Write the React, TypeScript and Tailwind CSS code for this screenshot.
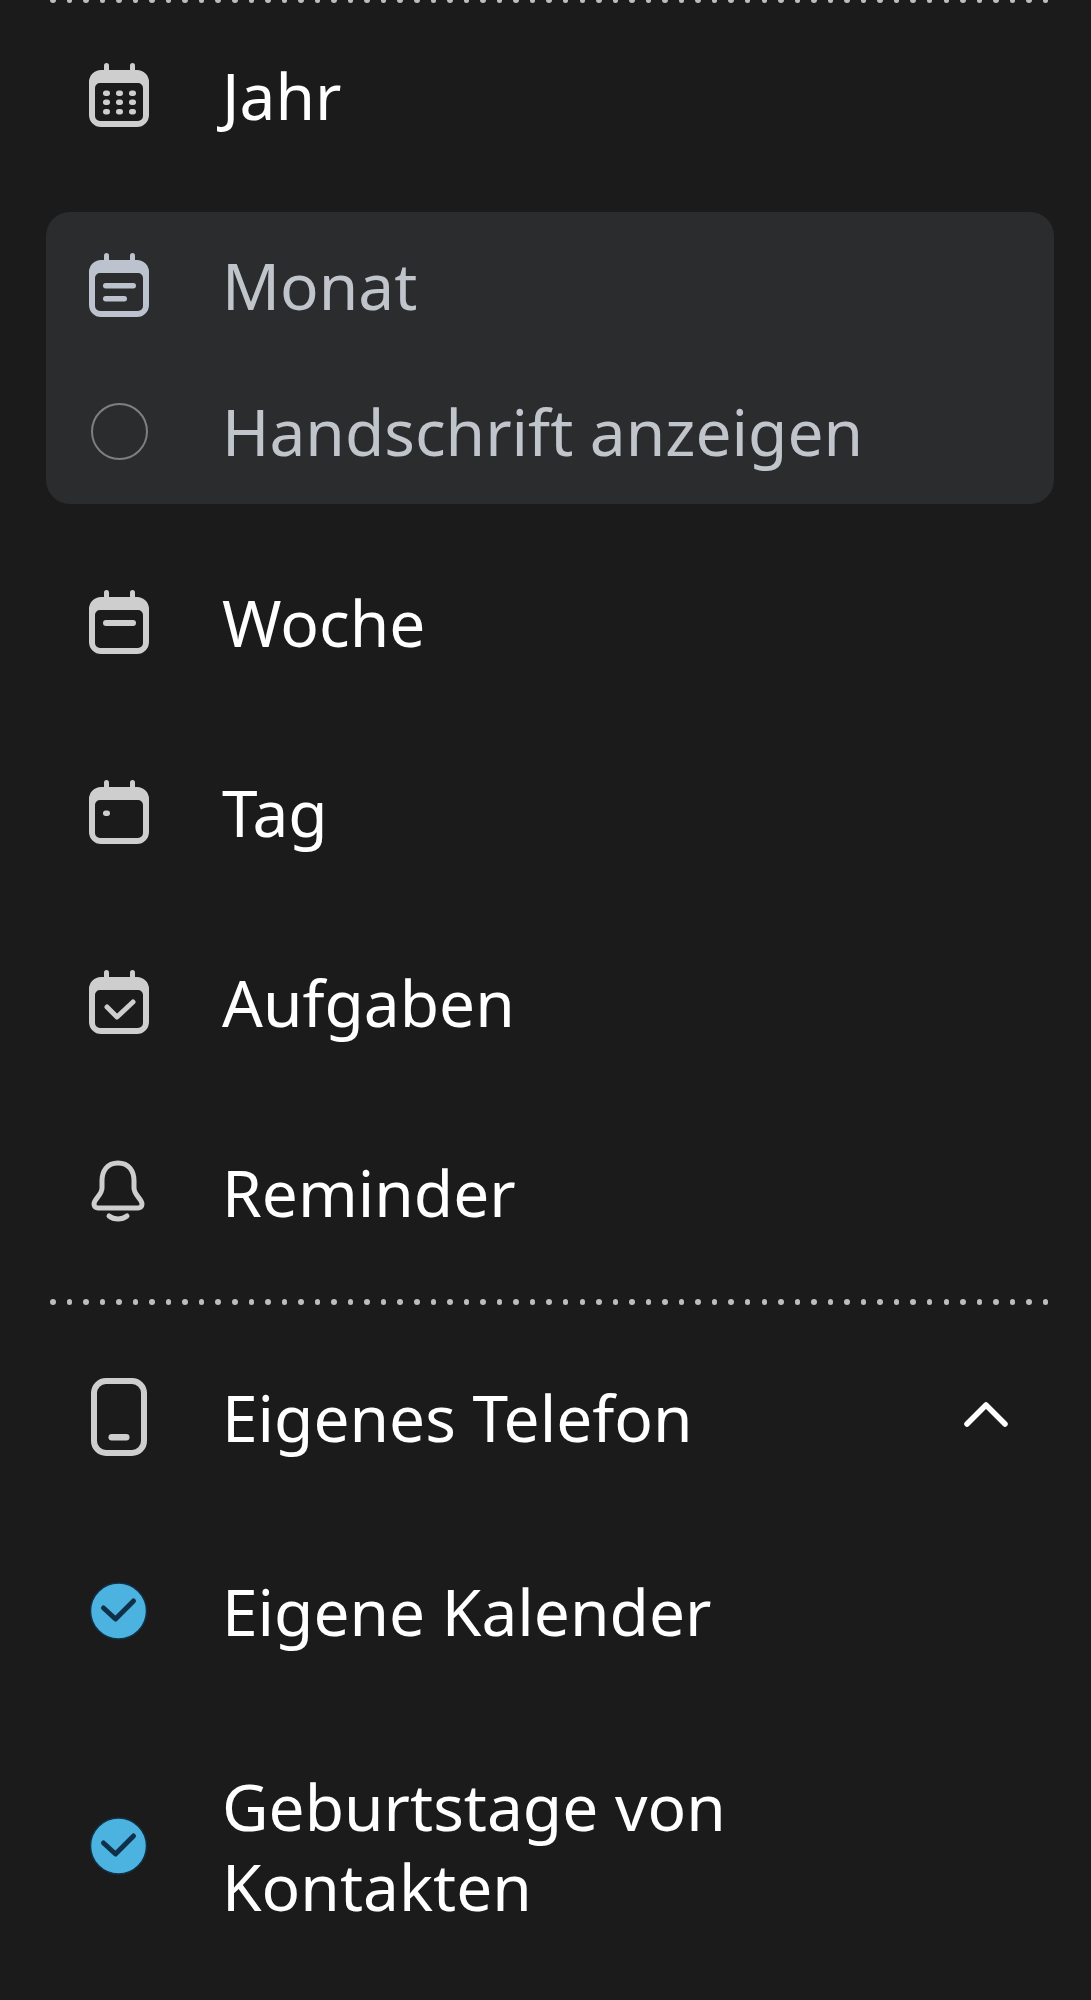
import React from "react";

const sans = "font-['Noto_Sans','Open_Sans',sans-serif]";

// outer shell shared by all the calendar icons, window cut out of it
function CalendarIcon({ color = "#cecece", children }: { color?: string; children?: React.ReactNode }) {
  return (
    <svg width="60" height="64" viewBox="0 0 60 64" fill={color} className="shrink-0">
      <rect x="15" y="0" width="5" height="12" rx="2.5" />
      <rect x="41" y="0" width="5" height="12" rx="2.5" />
      <path
        fillRule="evenodd"
        d="M12 7H48A12 12 0 0 1 60 19V52A12 12 0 0 1 48 64H12A12 12 0 0 1 0 52V19A12 12 0 0 1 12 7ZM11 20A5 5 0 0 0 6 25V53A5 5 0 0 0 11 58H49A5 5 0 0 0 54 53V25A5 5 0 0 0 49 20Z"
      />
      {children}
    </svg>
  );
}

function YearIcon() {
  const xs = [14, 27, 40];
  const ys = [27.5, 36.5, 46];
  return (
    <CalendarIcon>
      {ys.map((y) => xs.map((x) => <rect key={`${x}-${y}`} x={x} y={y} width="7" height="5.5" rx="2.7" />))}
    </CalendarIcon>
  );
}

function BellIcon() {
  return (
    <svg width="60" height="64" viewBox="0 0 60 64" fill="none" stroke="#cecece" strokeWidth="5" strokeLinecap="round" strokeLinejoin="round" className="shrink-0">
      <path d="M29 3C18 3 13 11 13 21V28C13 35 5 39 5 44C5 47 7 48 9 48H49C51 48 53 47 53 44C53 39 45 35 45 28V21C45 11 40 3 29 3Z" />
      <path d="M20 56C25 60 33 60 38 56" />
    </svg>
  );
}

function PhoneIcon() {
  return (
    <svg width="60" height="78" viewBox="0 0 60 78" className="shrink-0">
      <rect x="5" y="3" width="50" height="72" rx="12" fill="none" stroke="#cecece" strokeWidth="6" />
      <rect x="19.5" y="56" width="21" height="6.5" rx="3.2" fill="#cecece" />
    </svg>
  );
}

function CheckCircle() {
  return (
    <svg width="60" height="60" viewBox="0 0 60 60" className="shrink-0">
      <circle cx="29.5" cy="30" r="28" fill="#4cb2e0" stroke="#123046" strokeWidth="1.5" />
      <path d="M14.5 27L26.5 38L44.5 20" fill="none" stroke="#10304a" strokeWidth="5" strokeLinecap="round" strokeLinejoin="round" />
    </svg>
  );
}

function Dots() {
  return (
    <div className="ml-[50px] mr-[42px] flex h-[6px] justify-between">
      {Array.from({ length: 61 }).map((_, i) => (
        <span key={i} className="h-[5.5px] w-[5.5px] rounded-full bg-[#bdbdbd]" />
      ))}
    </div>
  );
}

function Row({ icon, label, height = "h-[190px]", muted = false }: { icon: React.ReactNode; label: React.ReactNode; height?: string; muted?: boolean }) {
  return (
    <div className={`flex items-center ${height}`}>
      <div className="flex w-[60px] shrink-0 justify-center">{icon}</div>
      <div className={`ml-[73px] pt-[2px] text-[64px] leading-[80px] ${muted ? "text-[#c0c5cc]" : "text-white"}`}>{label}</div>
    </div>
  );
}

export default function App() {
  return (
    <div className={`h-[2000px] w-[1091px] overflow-hidden bg-[#1b1b1b] ${sans}`}>
      <div className="-mt-[3px]">
        <Dots />
      </div>

      <div className="-mt-[3px] pl-[89px]">
        <Row icon={<YearIcon />} label="Jahr" />
      </div>

      {/* Selected view with its sub option */}
      <div className="ml-[46px] mr-[37px] mt-[22px] h-[292px] rounded-[24px] bg-[#2b2c2e] pl-[43px]">
        <Row
          height="h-[146px]"
          muted
          icon={
            <CalendarIcon color="#bcc3cf">
              <rect x="14" y="30" width="33" height="5.5" rx="2.7" />
              <rect x="14" y="43" width="24" height="5.5" rx="2.7" />
            </CalendarIcon>
          }
          label="Monat"
        />
        <Row
          height="h-[146px]"
          muted
          icon={<span className="h-[57px] w-[57px] rounded-full border-2 border-[#7f7f7f]" />}
          label="Handschrift anzeigen"
        />
      </div>

      <div className="mt-[23px] pl-[89px]">
        <Row
          icon={
            <CalendarIcon>
              <rect x="14" y="30" width="33" height="6" rx="3" />
            </CalendarIcon>
          }
          label="Woche"
        />
        <Row
          icon={
            <CalendarIcon>
              <rect x="14" y="30.5" width="7" height="5.5" rx="2.7" />
            </CalendarIcon>
          }
          label="Tag"
        />
        <Row
          icon={
            <CalendarIcon>
              <path d="M18 37L28 47L44 32" fill="none" stroke="#cecece" strokeWidth="5" strokeLinecap="round" strokeLinejoin="round" />
            </CalendarIcon>
          }
          label="Aufgaben"
        />
        <Row icon={<BellIcon />} label="Reminder" />
      </div>

      <div className="mt-[12px]">
        <Dots />
      </div>

      <div className="mt-[17px] pl-[89px] pr-[83px]">
        <div className="flex items-center justify-between">
          <Row height="h-[190px]" icon={<PhoneIcon />} label="Eigenes Telefon" />
          <svg width="44" height="26" viewBox="0 0 44 26" fill="none" stroke="#ffffff" strokeWidth="5.5" strokeLinecap="round" strokeLinejoin="round" className="-mt-[6px]">
            <path d="M3 23L22 4L41 23" />
          </svg>
        </div>
        <Row height="h-[198px]" icon={<CheckCircle />} label="Eigene Kalender" />
        <Row
          height="h-[272px]"
          icon={<CheckCircle />}
          label={
            <>
              Geburtstage von
              <br />
              Kontakten
            </>
          }
        />
      </div>
    </div>
  );
}
